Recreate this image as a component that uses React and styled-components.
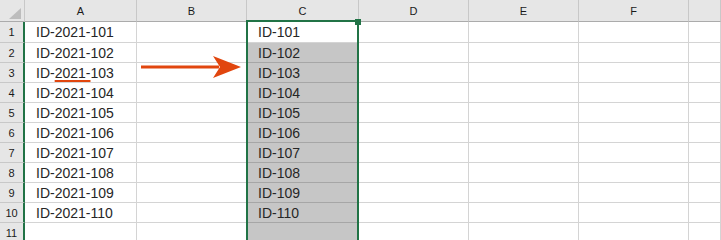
import React from "react";
import { styled, createGlobalStyle } from "styled-components";

const GlobalStyle = createGlobalStyle`
  html, body {
    margin: 0;
    padding: 0;
    background: #ffffff;
    overflow: hidden;
  }
`;

const Sheet = styled.div`
  position: relative;
  width: 721px;
  height: 240px;
  overflow: hidden;
  font-family: "Liberation Sans", Arial, sans-serif;
`;

const Grid = styled.div`
  display: grid;
  grid-template-columns: 25px 112px 110px 112px 110px 110px 110px 1fr;
  grid-template-rows: 22px 21px repeat(10, 20px);
  grid-auto-rows: 20px;
`;

const Corner = styled.div`
  background: #e6e6e6;
  border-right: 1px solid #c8c8c8;
  border-bottom: 1px solid #ababab;
  box-sizing: border-box;
  display: flex;
  align-items: flex-end;
  justify-content: flex-end;
  padding: 0 3px 2px 0;
`;

const ColumnHeader = styled.div`
  background: #e6e6e6;
  border-right: 1px solid #c8c8c8;
  border-bottom: 1px solid #ababab;
  box-sizing: border-box;
  display: flex;
  align-items: center;
  justify-content: center;
  font-size: 11px;
  color: #1a1a1a;
  padding-top: 1px;
`;

const RowHeader = styled.div`
  background: #e6e6e6;
  border-right: 2px solid #217346;
  border-bottom: 1px solid #c8c8c8;
  box-sizing: border-box;
  display: flex;
  align-items: center;
  justify-content: center;
  font-size: 11px;
  color: #1a1a1a;
`;

const Cell = styled.div`
  background: ${(p) => (p.$shaded ? "#c6c6c6" : "#ffffff")};
  border-right: 1px solid ${(p) => (p.$shaded ? "#a6a6a6" : "#d4d4d4")};
  border-bottom: 1px solid ${(p) => (p.$shaded ? "#a6a6a6" : "#d4d4d4")};
  box-sizing: border-box;
  display: flex;
  align-items: center;
  padding-left: 11px;
  font-size: 14px;
  color: #262626;
  white-space: nowrap;
`;

const Marked = styled.span`
  text-decoration: underline;
  text-decoration-color: #e1460e;
  text-decoration-thickness: 2px;
  text-underline-offset: 2px;
`;

const SelectionFrame = styled.div`
  position: absolute;
  left: 246px;
  top: 20px;
  width: 113px;
  height: 240px;
  border: 2px solid #217346;
  box-sizing: border-box;
  pointer-events: none;
`;

const FillHandle = styled.div`
  position: absolute;
  left: 355px;
  top: 19px;
  width: 6px;
  height: 6px;
  background: #217346;
`;

const Arrow = styled.svg`
  position: absolute;
  left: 140px;
  top: 54px;
`;

const columns = ["A", "B", "C", "D", "E", "F", ""];
const rows = Array.from({ length: 11 }, (_, i) => i + 1);

function cellText(col, row) {
  if (row > 10) return null;
  const n = 100 + row;
  if (col === "A") {
    if (row === 3)
      return (
        <>
          ID-<Marked>2021-</Marked>
          {n}
        </>
      );
    return `ID-2021-${n}`;
  }
  if (col === "C") return `ID-${n}`;
  return null;
}

export default function App() {
  return (
    <>
      <GlobalStyle />
      <Sheet>
        <Grid>
          <Corner>
            <svg width="12" height="11" viewBox="0 0 12 11">
              <polygon points="12,0 12,11 0,11" fill="#bdbdbd" />
            </svg>
          </Corner>
          {columns.map((c, i) => (
            <ColumnHeader key={i}>{c}</ColumnHeader>
          ))}
          {rows.map((r) => (
            <React.Fragment key={r}>
              <RowHeader>{r}</RowHeader>
              {columns.map((c, i) => (
                <Cell key={i} $shaded={c === "C" && r > 1}>
                  {cellText(c, r)}
                </Cell>
              ))}
            </React.Fragment>
          ))}
        </Grid>
        <SelectionFrame />
        <FillHandle />
        <Arrow width="104" height="26" viewBox="0 0 104 26">
          <rect x="1" y="11.5" width="78" height="3" fill="#e1460e" />
          <polygon points="73,2 101,13 73,24 80,13" fill="#e1460e" />
        </Arrow>
      </Sheet>
    </>
  );
}
